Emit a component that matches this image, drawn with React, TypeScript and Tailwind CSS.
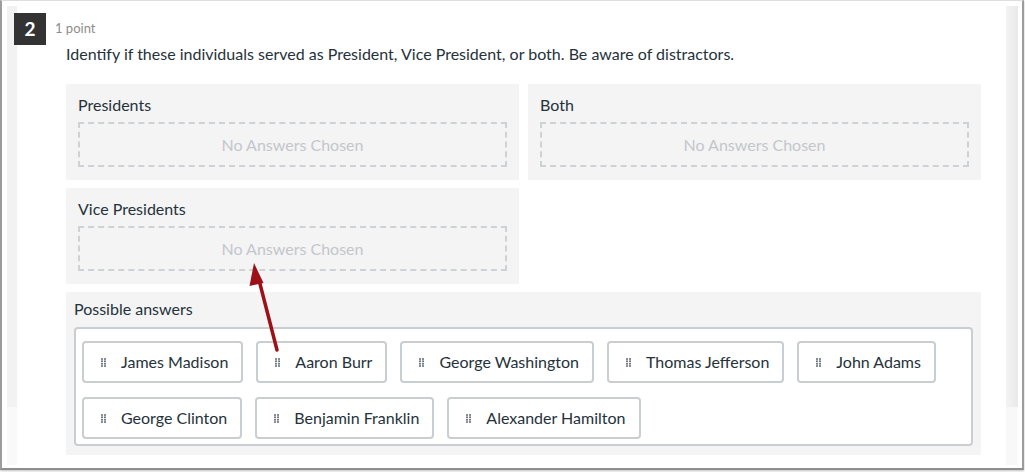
import React from 'react'

const ROW_ONE = ['James Madison', 'Aaron Burr', 'George Washington', 'Thomas Jefferson', 'John Adams']
const ROW_TWO = ['George Clinton', 'Benjamin Franklin', 'Alexander Hamilton']

function DragHandle() {
  return (
    <svg width="5" height="9" viewBox="0 0 5 9" className="shrink-0">
      {[1, 3.3, 5.7, 8].map((y) => (
        <g key={y} fill="#5d6973">
          <circle cx="1" cy={y} r="1" />
          <circle cx="4" cy={y} r="1" />
        </g>
      ))}
    </svg>
  )
}

function Chip({ label }: { label: string }) {
  return (
    <div className="flex items-center h-[42px] pl-[17px] pr-[13px] gap-[15px] border-2 border-[#c9ced2] rounded-[4px] bg-white text-[16px] text-[#25323b]">
      <DragHandle />
      <span>{label}</span>
    </div>
  )
}

function DropZone({ title }: { title: string }) {
  return (
    <div className="bg-[#f4f4f4] px-[12px] pt-[11px] pb-[13px]">
      <p className="text-[16px] leading-[20px] text-[#25323b] mb-[7px]">{title}</p>
      <div className="h-[45px] border-2 border-dashed border-[#cfd2d5] flex items-center justify-center text-[16px] text-[#c3c7cb]">
        No Answers Chosen
      </div>
    </div>
  )
}

export default function App() {
  return (
    <div className="relative w-[1025px] h-[472px] bg-white overflow-hidden" style={{ fontFamily: 'Lato, "Open Sans", sans-serif' }}>
      {/* window frame */}
      <div className="w-[1024px] h-[470px] bg-white border-l-2 border-r-2 border-b-2 border-t border-l-[#9c9c9c] border-r-[#9c9c9c] border-b-[#8e8e8e] border-t-[#dedede] shadow-[0_1px_2px_rgba(0,0,0,0.25)] flex pt-[5px]">
        <div className="w-[5px] shrink-0" />

        {/* left gutter */}
        <div className="w-[10px] shrink-0 flex flex-col">
          <div className="h-[401px] bg-[#f2f2f2]" />
          <div className="flex-1 bg-[#f9f9f9] mb-[3px]" />
        </div>

        {/* question */}
        <div className="flex-1 pt-[7px]">
          <div className="flex items-center h-[32px] -ml-[3px]">
            <div className="w-[32px] h-[32px] bg-[#333333] text-white text-[19px] font-bold flex items-center justify-center">2</div>
            <span className="ml-[9px] text-[13px] text-[#8d8d8d]">1 point</span>
          </div>
          <div className="pl-[49px] pr-[25px]">
            <p className="-mt-px text-[16px] leading-[20px] text-[#25323b]">
              Identify if these individuals served as President, Vice President, or both. Be aware of distractors.
            </p>

            <div className="mt-[20px] grid grid-cols-2 gap-x-[9px] gap-y-[8px]">
              <DropZone title="Presidents" />
              <DropZone title="Both" />
              <DropZone title="Vice Presidents" />
              <div />
            </div>

            <div className="mt-[8px] bg-[#f4f4f4] px-[8px] pt-[7px] pb-[9px]">
              <p className="text-[16px] leading-[20px] text-[#25323b] mb-[8px]">Possible answers</p>
              <div className="border-2 border-[#c9ced2] rounded-[4px] bg-white pl-[6px] pr-[6px] pt-[12px] pb-[5px] flex flex-col gap-[14px]">
                <div className="flex gap-[13px]">
                  {ROW_ONE.map((n) => <Chip key={n} label={n} />)}
                </div>
                <div className="flex gap-[13px]">
                  {ROW_TWO.map((n) => <Chip key={n} label={n} />)}
                </div>
              </div>
            </div>
          </div>
        </div>

        {/* right gutter */}
        <div className="w-[12px] shrink-0 flex flex-col">
          <div className="h-[401px] bg-gradient-to-r from-[#f3f3f3] to-[#e9e9e9]" />
          <div className="flex-1 bg-[#f8f8f8] mb-[3px]" />
        </div>
        <div className="w-[4px] shrink-0" />
      </div>

      {/* annotation arrow */}
      <svg className="absolute left-0 top-0 pointer-events-none" width="1025" height="472">
        <line x1="277" y1="350" x2="258.5" y2="278" stroke="#9b1117" strokeWidth="3.5" strokeLinecap="round" />
        <polygon points="254,263 263.5,283 249.5,286" fill="#9b1117" />
      </svg>
    </div>
  )
}
